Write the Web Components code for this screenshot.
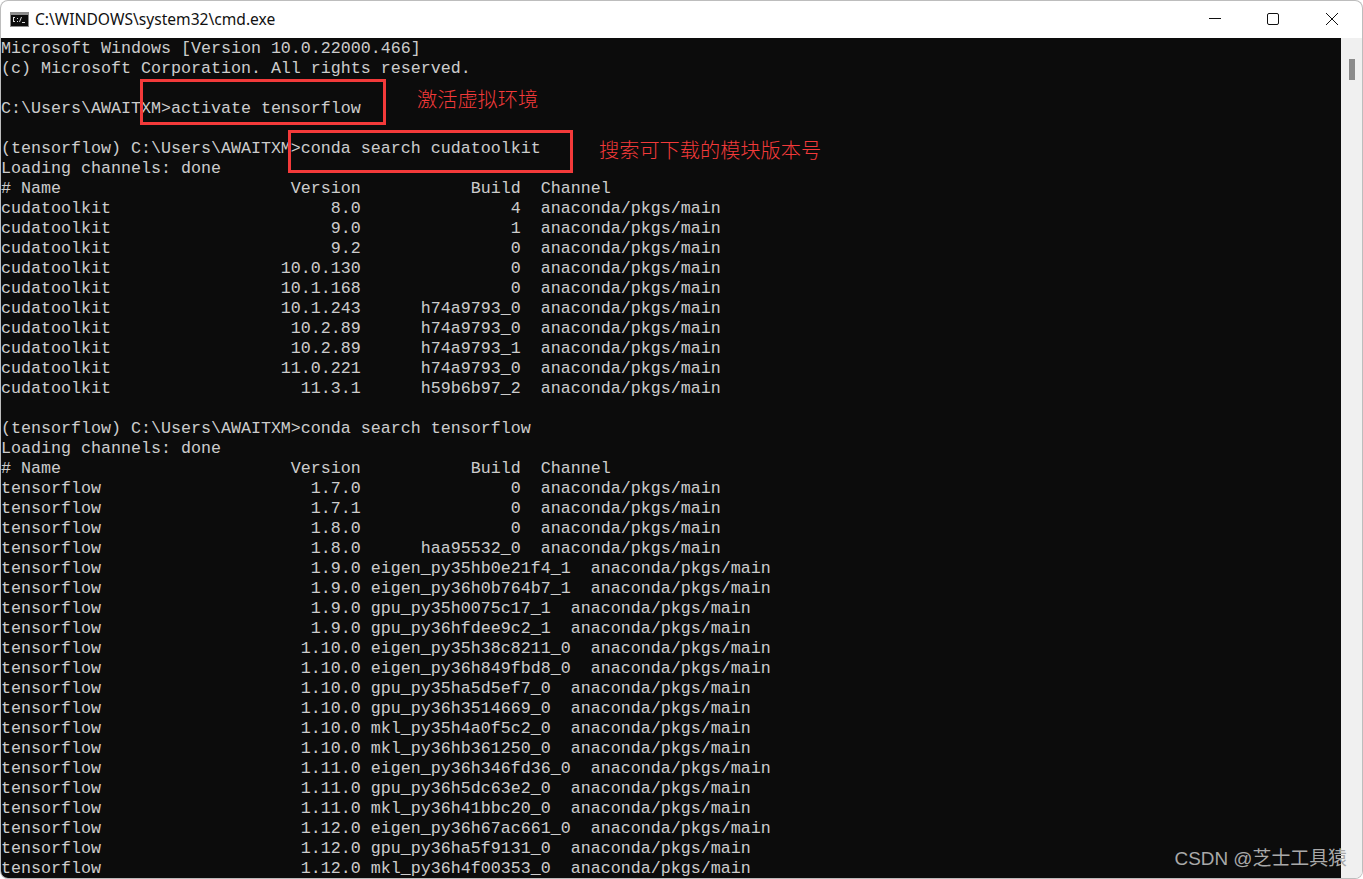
<!DOCTYPE html>
<html>
<head>
<meta charset="utf-8">
<title>cmd</title>
<style>
html,body{margin:0;height:100%;overflow:hidden;background:#fff;}
</style>
</head>
<body>
<cmd-window>
  <span slot="title">C:\WINDOWS\system32\cmd.exe</span>
  <cmd-terminal></cmd-terminal>
  <red-note slot="overlay" box="140,79,246,46" label="激活虚拟环境" at="417,87"></red-note>
  <red-note slot="overlay" box="288,130,285,43" label="搜索可下载的模块版本号" at="599,138"></red-note>
  <water-mark slot="overlay">CSDN @芝士工具猿</water-mark>
</cmd-window>
<script>
class CmdWindow extends HTMLElement{
    constructor(){
        super();
        this.shadow = this.attachShadow({mode: 'open'});
        this.shadow.innerHTML = `
        <style>
            :host{display:flex;flex-direction:column;position:relative;width:1363px;height:879px;box-sizing:border-box;
                background:#fff;border-radius:8px;overflow:hidden;font-family:"Noto Sans","Liberation Sans",sans-serif;
                box-shadow:inset 0 0 0 1px #bdbdbd;}
            .bar{display:flex;align-items:center;height:38px;flex:none;padding-left:10px;color:#111;font-size:15.6px;}
            .bar svg.app{margin-right:6px;flex:none;}
            .bar .t{flex:1;white-space:nowrap;}
            .ctl{display:flex;padding-right:2px;}
            .ctl div{width:58px;height:38px;display:flex;align-items:center;justify-content:center;}
            .ctl div:last-child{width:59px;}
            .main{display:flex;flex:1;min-height:0;padding:0 1px 1px 1px;}
            .scroll{width:21px;flex:none;background:#f0f0f0;padding:21px 0 0 8px;box-sizing:border-box;border-bottom-right-radius:7px;}
            .thumb{width:6px;height:21px;background:#8b8b8b;}
            ::slotted(cmd-terminal){flex:1;min-width:0;}
        </style>
        <div class="bar">
            <svg class="app" width="19" height="15" viewBox="0 0 19 15">
                <rect width="19" height="15" fill="#8c8c8c"/>
                <rect x="1" y="3" width="17" height="11" fill="#0c0c0c"/>
                <path d="M3 5h2v1H3zM3 5h1v4H3zM3 9h2v1H3zM7 6h1v1H7zM7 9h1v1H7zM9 10l2-5h1l-2 5zM12 10h3v1h-3z" fill="#ddd"/>
            </svg>
            <div class="t"><slot name="title"></slot></div>
            <div class="ctl">
                <div><svg width="12" height="12" viewBox="0 0 12 12"><path d="M0 5.5h12" stroke="#111" fill="none"/></svg></div>
                <div><svg width="12" height="12" viewBox="0 0 12 12"><rect x=".5" y=".5" width="11" height="11" rx="1.5" stroke="#111" fill="none"/></svg></div>
                <div><svg width="14" height="14" viewBox="0 0 14 14"><path d="M1 1l12 12M13 1L1 13" stroke="#111" fill="none"/></svg></div>
            </div>
        </div>
        <div class="main">
            <slot></slot>
            <div class="scroll"><div class="thumb"></div></div>
        </div>
        <slot name="overlay"></slot>`;
    }
}
customElements.define('cmd-window', CmdWindow);

class CmdTerminal extends HTMLElement{
    constructor(){
        super();
        this.shadow = this.attachShadow({mode: 'open'});
    }
    row(name, ver, build, channel){
        return name.padEnd(36 - ver.length) + ver + ' ' + build.padStart(15) + '  ' + channel;
    }
    connectedCallback(){
        const ch = 'anaconda/pkgs/main';
        const cuda = [['8.0','4'],['9.0','1'],['9.2','0'],['10.0.130','0'],['10.1.168','0'],['10.1.243','h74a9793_0'],
            ['10.2.89','h74a9793_0'],['10.2.89','h74a9793_1'],['11.0.221','h74a9793_0'],['11.3.1','h59b6b97_2']];
        const tf = [['1.7.0','0'],['1.7.1','0'],['1.8.0','0'],['1.8.0','haa95532_0'],
            ['1.9.0','eigen_py35hb0e21f4_1'],['1.9.0','eigen_py36h0b764b7_1'],['1.9.0','gpu_py35h0075c17_1'],['1.9.0','gpu_py36hfdee9c2_1'],
            ['1.10.0','eigen_py35h38c8211_0'],['1.10.0','eigen_py36h849fbd8_0'],['1.10.0','gpu_py35ha5d5ef7_0'],['1.10.0','gpu_py36h3514669_0'],
            ['1.10.0','mkl_py35h4a0f5c2_0'],['1.10.0','mkl_py36hb361250_0'],
            ['1.11.0','eigen_py36h346fd36_0'],['1.11.0','gpu_py36h5dc63e2_0'],['1.11.0','mkl_py36h41bbc20_0'],
            ['1.12.0','eigen_py36h67ac661_0'],['1.12.0','gpu_py36ha5f9131_0'],['1.12.0','mkl_py36h4f00353_0']];
        const head = '# Name'.padEnd(29) + 'Version' + ' '.repeat(11) + 'Build  Channel';
        const lines = [
            'Microsoft Windows [Version 10.0.22000.466]',
            '(c) Microsoft Corporation. All rights reserved.',
            '',
            'C:\\Users\\AWAITXM>activate tensorflow',
            '',
            '(tensorflow) C:\\Users\\AWAITXM>conda search cudatoolkit',
            'Loading channels: done',
            head,
            ...cuda.map(r => this.row('cudatoolkit', r[0], r[1], ch)),
            '',
            '(tensorflow) C:\\Users\\AWAITXM>conda search tensorflow',
            'Loading channels: done',
            head,
            ...tf.map(r => this.row('tensorflow', r[0], r[1], ch))
        ];
        const style = document.createElement('style');
        style.textContent = `
            :host{display:block;background:#0c0c0c;color:#ccc;overflow:hidden;border-bottom-left-radius:7px;
                font-family:"Liberation Mono",monospace;font-size:16.67px;}
            div{height:20px;line-height:20px;white-space:pre;position:relative;top:1px;}
        `;
        this.shadow.appendChild(style);
        lines.forEach(text => {
            const line = document.createElement('div');
            line.textContent = text;
            this.shadow.appendChild(line);
        });
    }
}
customElements.define('cmd-terminal', CmdTerminal);

class RedNote extends HTMLElement{
    constructor(){
        super();
        this.shadow = this.attachShadow({mode: 'open'});
    }
    connectedCallback(){
        const [x, y, w, h] = this.getAttribute('box').split(',');
        const [lx, ly] = this.getAttribute('at').split(',');
        this.shadow.innerHTML = `
        <style>
            :host{display:contents;}
            .box{position:absolute;box-sizing:border-box;border:3px solid #f33a3a;left:${x}px;top:${y}px;width:${w}px;height:${h}px;}
            .label{position:absolute;left:${lx}px;top:${ly}px;color:#f33a3a;font:300 20.2px/24px "Noto Sans CJK SC",sans-serif;white-space:nowrap;}
        </style>
        <div class="box"></div>
        <div class="label">${this.getAttribute('label')}</div>`;
    }
}
customElements.define('red-note', RedNote);

class WaterMark extends HTMLElement{
    constructor(){
        super();
        this.shadow = this.attachShadow({mode: 'open'});
        this.shadow.innerHTML = `
        <style>
            :host{position:absolute;right:16px;bottom:8px;color:#a9a9a9;white-space:nowrap;
                font:18.9px/24px "Liberation Sans","Noto Sans CJK SC",sans-serif;}
        </style>
        <slot></slot>`;
    }
}
customElements.define('water-mark', WaterMark);
</script>
</body>
</html>
